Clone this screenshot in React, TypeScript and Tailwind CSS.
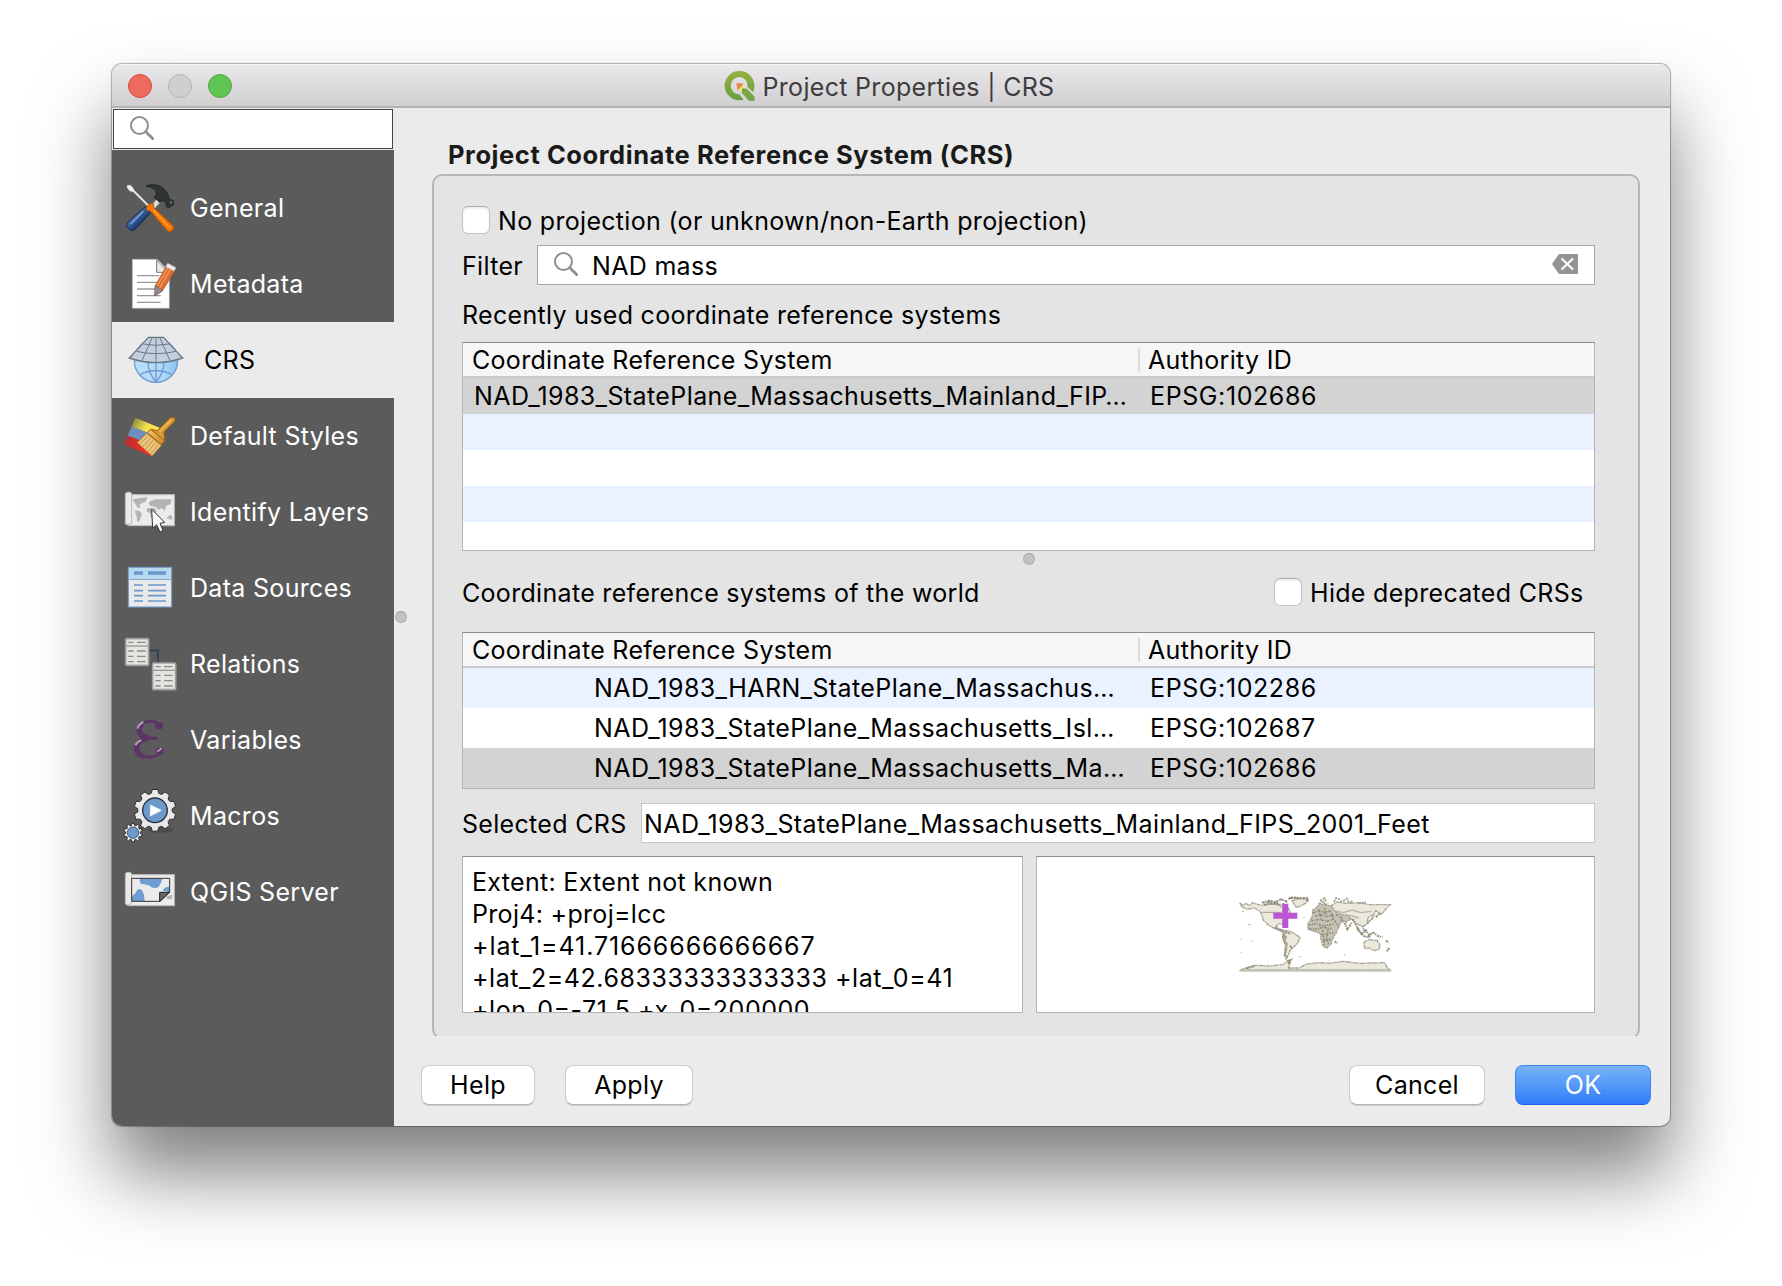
import type { ReactNode } from "react";

function Svg({ box, w = 56, h = 56, children }: { box: string; w?: number; h?: number; children: ReactNode }) {
  return (
    <svg viewBox={box} width={w} height={h} className="block shrink-0" fill="none">
      {children}
    </svg>
  );
}

const Tools = () => (
  <Svg box="66 390 168 168">
    <defs>
      <linearGradient id="blueGrip" x1="0" y1="0" x2="1" y2="1">
        <stop offset="0.2" stopColor="#5f8fce" />
        <stop offset="0.6" stopColor="#1f3f74" />
      </linearGradient>
    </defs>
    <path d="M152 470 L172 444 L184 454 L160 480 Z" fill="#d9dcd6" stroke="#8b8d88" strokeWidth="2" />
    <path d="M138 408 Q160 398 184 410 Q204 424 208 448 L220 452 Q224 464 214 468 L206 474 Q196 474 198 458 Q188 446 180 458 L162 442 Q172 434 168 424 Q158 410 138 408 Z" fill="#2e3436" stroke="#15191a" strokeWidth="2" />
    <circle cx="213" cy="457" r="4" fill="#626a6b" />
    <path d="M136 470 L154 486 L106 538 Q98 546 88 538 L82 532 Q76 524 84 516 Z" fill="url(#blueGrip)" stroke="#172c50" strokeWidth="3" />
    <path d="M130 484 L92 522" stroke="#85abe0" strokeWidth="4" />
    <path d="M98 420 L148 470" stroke="#e6e6e4" strokeWidth="6" />
    <path d="M82 406 L92 406 L102 418 L98 426 L88 422 L81 412 Z" fill="#f1f1ef" stroke="#cfcfcd" strokeWidth="1" />
    <path d="M152 460 L160 462 L162 474 L216 524 Q224 532 218 540 Q210 548 202 542 L152 484 L140 480 L140 470 Z" fill="#f57900" stroke="#c35400" strokeWidth="3" />
    <path d="M160 480 L208 532" stroke="#ffa640" strokeWidth="4" />
    <path d="M168 480 L212 526" stroke="#d86200" strokeWidth="2" />
  </Svg>
);

const Metadata = () => (
  <Svg box="66 618 168 168">
    <path d="M97 628 H172 L208 664 V775 H97 Z" fill="#fff" stroke="#a9a9a9" strokeWidth="2" />
    <path d="M170 630 V667 H206 Z" fill="#e8e8e8" stroke="#777" strokeWidth="3" />
    <path d="M111 677 H178 M111 697 H172 M111 717 H166 M111 737 H182 M111 757 H182" stroke="#999" strokeWidth="4" />
    <path d="M198 650 L224 662 L188 722 L164 738 L166 706 Z" fill="#dd6f32" stroke="#b5531c" strokeWidth="2" />
    <path d="M203 654 L170 710 M211 658 L178 716" stroke="#f2955c" strokeWidth="4" />
    <path d="M166 706 L188 722 L164 738 Z" fill="#8e8e8e" stroke="#636363" strokeWidth="2" />
    <path d="M203 640 L228 653 L222 663 L197 650 Z" fill="#ececec" stroke="#c7b3b3" strokeWidth="2" />
  </Svg>
);

const Globe = () => (
  <Svg box="84 66 168 168">
    <defs>
      <linearGradient id="sea" x1="0" y1="0" x2="1" y2="0">
        <stop offset="0" stopColor="#b9defa" />
        <stop offset="0.6" stopColor="#b3dbf8" />
        <stop offset="1" stopColor="#8cc4f2" />
      </linearGradient>
    </defs>
    <circle cx="168" cy="152" r="65" fill="url(#sea)" stroke="#6d9ad2" strokeWidth="4" />
    <path d="M168 87 V216 M143 150 Q145 194 168 215 Q191 194 193 150 M121 193 Q168 170 215 193" stroke="#6d9ad2" strokeWidth="4" />
    <path d="M145 82 H191 Q214 108 248 144 Q168 172 88 144 Q120 110 145 82 Z" fill="#c3cfde" stroke="#6a7885" strokeWidth="4" />
    <path d="M129 102 Q168 110 207 102 M110 124 Q168 138 228 124 M168 82 V157 M157 82 L126 152 M179 82 L210 152" stroke="#6a7885" strokeWidth="3" />
  </Svg>
);

const Styles = () => (
  <Svg box="66 294 168 168">
    <defs>
      <linearGradient id="yl" x1="0" y1="0" x2="1" y2="0.4">
        <stop offset="0" stopColor="#7d7a3c" />
        <stop offset="0.6" stopColor="#f6e34e" />
      </linearGradient>
      <linearGradient id="rd" x1="0" y1="0" x2="1" y2="0">
        <stop offset="0" stopColor="#b03030" />
        <stop offset="0.6" stopColor="#ee2a2a" />
      </linearGradient>
      <linearGradient id="brush" x1="0" y1="0" x2="1" y2="1">
        <stop offset="0" stopColor="#f0c877" />
        <stop offset="1" stopColor="#c9831d" />
      </linearGradient>
    </defs>
    <path d="M106 323 L186 356 L170 378 L95 350 Z" fill="url(#yl)" />
    <path d="M95 350 L160 374 L140 398 L83 377 Z" fill="#6f8fbd" />
    <path d="M83 377 L150 402 L158 440 L72 403 Z" fill="url(#rd)" />
    <path d="M216 322 Q228 322 224 334 L192 366 L194 392 L182 406 L140 372 L152 358 L172 362 L206 328 Q210 322 216 322 Z" fill="#d9982f" stroke="#9a6410" strokeWidth="3" />
    <path d="M140 370 L184 406 L156 438 L112 398 Z" fill="#ecc57c" stroke="#b98435" strokeWidth="3" />
    <path d="M144 378 L120 402 M152 384 L128 410 M160 390 L136 418 M168 396 L144 426 M176 402 L152 432" stroke="#a97a3a" strokeWidth="2" />
    <path d="M142 368 L152 358 L194 392 L184 404 Z" fill="url(#brush)" stroke="#9a6410" strokeWidth="3" />
    <path d="M214 330 L178 366" stroke="#f2c069" strokeWidth="4" />
  </Svg>
);

const Identify = () => (
  <Svg box="66 522 168 168">
    <rect x="84" y="554" width="139" height="93" fill="#ebebeb" stroke="#bdbdbd" strokeWidth="3" />
    <path d="M76 550 Q86 542 95 550 V640 Q84 648 76 642 Z" fill="#e9e9e9" stroke="#b9b9b9" strokeWidth="3" />
    <path d="M98 568 L120 564 L142 562 L138 574 L126 580 L118 584 L122 594 L112 592 L104 578 Z M104 602 L118 602 L126 612 L118 634 L112 636 L110 620 Z M150 574 L166 568 L214 568 L212 582 L198 588 L194 602 L184 594 L176 600 L166 590 L152 588 L146 580 Z M142 594 L164 594 L170 604 L162 628 L152 622 L150 610 L140 604 Z M200 624 L210 614 L216 618 L216 630 Z" fill="#b3b3b3" />
    <path d="M155 598 L158 654 L170 644 L180 666 L189 662 L180 640 L194 637 Z" fill="#fff" stroke="#333" strokeWidth="3" />
  </Svg>
);

const DataSources = () => (
  <Svg box="66 60 168 168">
    <rect x="85" y="82" width="130" height="119" fill="#e9e9ea" stroke="#6f9bce" strokeWidth="3" />
    <rect x="87" y="84" width="126" height="31" fill="#b7d9ee" />
    <path d="M86 118 H214" stroke="#7fa8d4" strokeWidth="4" />
    <path d="M102 99 H129 M144 99 H198" stroke="#6a98cd" strokeWidth="11" />
    <path d="M102 135 H129 M144 135 H198 M102 152 H129 M144 152 H198 M102 167 H129 M144 167 H198 M102 183 H129 M144 183 H198" stroke="#6a98cd" strokeWidth="5" />
  </Svg>
);

const MiniTable = ({ x, y }: { x: number; y: number }) => (
  <g transform={`translate(${x} ${y})`}>
    <rect x="2" y="2" width="69" height="80" rx="3" fill="#e4e4e2" stroke="#a0a09a" strokeWidth="5" />
    <path d="M3 24 H70" stroke="#9a9a94" strokeWidth="4" />
    <path d="M10 13 H26 M36 13 H62 M10 39 H26 M36 39 H62 M10 55 H26 M36 55 H62 M10 71 H26 M36 71 H62" stroke="#8b8b86" strokeWidth="4" />
  </g>
);

const Relations = () => (
  <Svg box="66 288 168 168">
    <path d="M146 331 H174 V368" stroke="#2c3e57" strokeWidth="5" />
    <MiniTable x={75} y={294} />
    <MiniTable x={156} y={367} />
  </Svg>
);

const Variables = () => (
  <Svg box="66 516 168 168">
    <path d="M182 556 Q170 543 150 544 Q120 547 120 568 Q122 591 148 595 L168 595 M148 595 Q114 599 112 624 Q114 650 150 651 Q182 648 186 630" stroke="#5c3566" strokeWidth="9" strokeLinecap="round" />
    <path d="M128 550 Q112 562 120 580 Q128 592 146 594 Q116 600 109 620 Q108 644 134 651" stroke="#5c3566" strokeWidth="16" />
    <ellipse cx="177" cy="557" rx="12" ry="11" fill="#5c3566" />
    <ellipse cx="180" cy="633" rx="12" ry="10" fill="#5c3566" />
    <path d="M112 566 Q116 552 130 546 M106 616 Q112 604 124 601 M172 634 Q182 630 184 624" stroke="#b49cba" strokeWidth="6" />
  </Svg>
);

function gear(cx: number, cy: number, r: number, depth: number, teeth: number) {
  const pts: string[] = [];
  for (let i = 0; i < teeth; i++) {
    const a = ((i + 0.5) / teeth) * Math.PI * 2;
    const s = Math.PI / teeth;
    [
      [-0.95, r - depth],
      [-0.55, r],
      [0.55, r],
      [0.95, r - depth],
    ].forEach(([k, d]) => {
      const t = a + k * s * 0.75;
      pts.push(`${(cx + Math.cos(t) * d).toFixed(1)},${(cy + Math.sin(t) * d).toFixed(1)}`);
    });
  }
  return pts.join(" ");
}

const Macros = () => (
  <Svg box="66 54 168 168">
    <ellipse cx="182" cy="180" rx="40" ry="8" fill="#4d4d4d" />
    <polygon points={gear(165, 121, 63, 11, 10)} fill="#e9e9e9" stroke="#2f2f2f" strokeWidth="3" strokeLinejoin="round" />
    <circle cx="165" cy="121" r="37" fill="#6c9acb" stroke="#26313d" strokeWidth="4" />
    <path d="M151 105 V138 L184 121 Z" fill="#fff" stroke="#fff" strokeWidth="2" strokeLinejoin="round" />
    <polygon points={gear(99, 188, 28, 6, 10)} fill="#eaeaea" stroke="#2f2f2f" strokeWidth="3" strokeLinejoin="round" />
    <circle cx="99" cy="188" r="17" fill="#6c9acb" stroke="#41576e" strokeWidth="3" />
  </Svg>
);

const Server = () => (
  <Svg box="66 282 168 168">
    <rect x="82" y="314" width="141" height="93" fill="#ebebeb" stroke="#bdbdbd" strokeWidth="3" />
    <path d="M76 310 Q86 303 95 310 V400 Q84 408 76 402 Z" fill="#e9e9e9" stroke="#b9b9b9" strokeWidth="3" />
    <path d="M198 380 L216 374 L216 386 L202 388 Z" fill="#b3b3b3" />
    <path d="M95 325 H209 V367 L180 394 H95 Z" fill="#ebebeb" />
    <path d="M119 327 H187 Q184 340 176 350 Q166 358 152 350 Q144 342 124 342 Q118 336 119 327 Z M96 378 Q106 374 110 362 Q118 352 127 362 Q134 374 134 393 H96 Z M188 362 Q192 350 208 350 V366 Z" fill="#6f9dd2" />
    <path d="M95 325 H209 V367 L180 394 H95 Z" stroke="#333" strokeWidth="3" />
    <path d="M209 367 H179 V394 Z" fill="#666" stroke="#222" strokeWidth="3" />
  </Svg>
);

const Logo = () => (
  <svg viewBox="0 0 30 30" width="31" height="30" className="block shrink-0" fill="none">
    <defs>
      <linearGradient id="qg" x1="0" y1="0" x2="0" y2="1">
        <stop offset="0" stopColor="#97b03c" />
        <stop offset="1" stopColor="#68a042" />
      </linearGradient>
    </defs>
    <path fillRule="evenodd" d="M15 0 A15 15 0 0 1 30 15 Q30 18 28.500 21 L23 16 Q23.500 7 15 6 A8.500 8.500 0 0 0 6.300 15 A8.500 8.500 0 0 0 15 23.500 L19 28.800 A15 15 0 0 1 0 15 A15 15 0 0 1 15 0 Z" fill="url(#qg)" />
    <path d="M12 12 L18.500 12.500 L17.500 16 L13 19.500 Z" fill="#e8854a" />
    <path d="M18 14.500 L20 17.500 L17.500 21 L14.500 17.500 Z" fill="#f4e552" />
    <path d="M17.500 17.500 H22 L30 25.500 V30 H24.500 L17.500 22 Z" fill="#77a647" />
  </svg>
);

const Search = () => (
  <svg viewBox="0 0 24 24" width="24" height="24" className="block shrink-0" fill="none" stroke="#909090">
    <circle cx="9.500" cy="9.500" r="8.500" strokeWidth="2" />
    <path d="M15.800 15.800 L22.800 22.800" strokeWidth="2.800" strokeLinecap="round" />
  </svg>
);

const Clear = () => (
  <svg viewBox="0 0 26 20" width="26" height="20" className="block shrink-0" fill="none">
    <path d="M0 10 L7 0 H26 V20 H7 Z" fill="#959595" />
    <path d="M9.500 4.500 L21 15.500 M21 4.500 L9.500 15.500" stroke="#fff" strokeWidth="2" />
  </svg>
);

const WorldMap = () => (
  <svg viewBox="56 48 466 240" width="155.300" height="80" className="block shrink-0" fill="none">
    <g fill="#ebe8dc" stroke="#a5a293" strokeWidth="4" strokeLinejoin="round" strokeDasharray="11 2 5 2">
      <path d="M62 70 L72 76 L78 70 L92 76 L100 68 L124 76 L150 72 L176 74 L190 84 L204 80 L214 96 L206 106 L196 116 L194 134 L182 130 L172 136 L176 146 L190 150 L200 160 L186 154 L166 146 L148 136 L132 120 L124 96 L106 84 L84 88 L66 80 Z" />
      <path d="M218 62 L240 56 L266 60 L258 70 L240 80 L230 82 L224 72 Z" />
      <path d="M194 152 L208 152 L224 160 L242 172 L236 188 L224 200 L212 212 L206 228 L200 238 L196 224 L198 196 L190 174 Z" />
      <path d="M64 270 L84 262 L110 256 L150 258 L190 254 L208 240 L214 246 L206 264 L240 264 L262 252 L300 248 L330 250 L372 244 L420 250 L496 248 L504 264 L514 270 Z" />
      <path d="M334 78 L352 66 L384 70 L420 68 L452 74 L514 74 L500 86 L492 98 L482 104 L470 92 L462 104 L446 112 L444 130 L432 140 L410 130 L394 116 L372 112 L350 102 L336 96 Z" />
      <path d="M434 186 L452 178 L464 182 L472 180 L482 194 L480 208 L464 212 L450 204 L436 206 Z" />
    </g>
    <path d="M280 90 L290 84 L302 70 L312 74 L336 78 L348 94 L366 104 L388 106 L394 118 L380 126 L368 122 L362 134 L356 146 L350 160 L342 172 L336 190 L324 204 L312 200 L306 182 L302 160 L284 154 L266 148 L266 130 L274 118 L280 106 Z" fill="#c6c3b4" stroke="#a09d8c" strokeWidth="4" strokeDasharray="5 3 8 2" />
    <path d="M128 68 L150 62 L168 66 L186 58 L206 66 M134 74 L160 70 L184 74 L204 76 M144 66 L176 68 M190 70 L206 88 M208 58 L214 52 L238 54 M214 54 L266 54 L264 66" stroke="#8f8c7b" strokeWidth="6" strokeDasharray="8 2 5 3" />
    <path d="M282 98 L300 92 L318 98 L330 92 M288 108 L304 104 L324 110 L340 104 M276 122 L300 118 L322 124 L346 116 M268 136 L290 130 L310 138 L342 132 M270 146 L292 148 L308 142 L336 146 M298 88 L306 116 M316 84 L320 104 M332 92 L344 116 M310 150 L316 194 M326 148 L322 176 L328 192 M306 164 L342 158 M312 180 L336 178 M346 122 L356 138 M350 104 L372 116" stroke="#858271" strokeWidth="4.500" strokeDasharray="6 4 3 3" />
    <path d="M302 62 L316 54 L320 64 M298 72 L312 64 L318 76 L326 68 M344 66 L350 54 L362 58 M362 66 L376 60 L384 56 L388 66 L402 64 M418 70 L440 66" stroke="#a09d8c" strokeWidth="5" strokeDasharray="7 3" />
    <path d="M346 92 L372 98 L398 90 L424 98 L456 94 M378 106 L400 108 L418 114" stroke="#b8b5a6" strokeWidth="4" />
    <path d="M364 118 L376 128 L384 148 L390 140 L398 126 M400 116 L410 134 L416 150 L426 162 L436 156 L430 138 M414 142 L432 168 L448 172 L458 158 M438 148 L448 164 L462 158 L476 168 L490 172 M444 130 L458 116 L466 104 M470 112 L482 98 M500 182 L508 188 M510 204 L500 216 M346 184 L354 190" stroke="#96937f" strokeWidth="6" strokeDasharray="7 2 4 3" />
    <path d="M166 142 L180 148 L194 156 L206 158 L214 162 M192 160 L200 172 L194 180 L202 192 L200 210 L196 226 L206 232 M212 198 L220 206 M190 166 L198 186 M204 244 L214 240 L206 254 M80 266 L104 258" stroke="#96937f" strokeWidth="6" strokeDasharray="8 2 5 2" />
    <path d="M86 134 H94 M68 94 H74 M240 230 H246 M374 224 H378 M64 178 H68 M96 184 H100 M252 112 H256 M64 218 H67" stroke="#c4c2b8" strokeWidth="4" />
    <path d="M60 272 H516" stroke="#c6c4b9" strokeWidth="6" />
    <path d="M126 97 H186" stroke="#a5a293" strokeWidth="3" />
    <path d="M162 107 H234 M198 71 V144" stroke="#ba55d3" strokeWidth="18" />
  </svg>
);

const items: [string, ReactNode][] = [
  ["General", <Tools />],
  ["Metadata", <Metadata />],
  ["CRS", <Globe />],
  ["Default Styles", <Styles />],
  ["Identify Layers", <Identify />],
  ["Data Sources", <DataSources />],
  ["Relations", <Relations />],
  ["Variables", <Variables />],
  ["Macros", <Macros />],
  ["QGIS Server", <Server />],
];

const Check = () => (
  <span className="h-[28px] w-[28px] shrink-0 rounded-[6px] border border-[#c3c3c3] border-t-[#a9a9a9] bg-white shadow-[inset_0_2px_2px_rgba(0,0,0,0.07)]" />
);

const Grip = () => (
  <span className="block h-[12px] w-[12px] rounded-full border border-[#b0b0b0] border-t-[#989898] bg-[#c2c2c2]" />
);

const HeaderRow = () => (
  <div className="flex h-[35px] shrink-0 items-center border-b-2 border-[#cacaca] bg-[#f6f6f6]">
    <span className="w-[675px] pl-[9px] pt-px">Coordinate Reference System</span>
    <span className="h-[24px] w-[2px] bg-[#dcdcdc]" />
    <span className="pl-[8px] pt-px">Authority ID</span>
  </div>
);

const frame = "border border-[#b4b4b4] border-t-[#8c8c8c]";

const worldRows: [string, string, string][] = [
  ["NAD_1983_HARN_StatePlane_Massachus…", "EPSG:102286", "bg-[#ebf2ff]"],
  ["NAD_1983_StatePlane_Massachusetts_Isl…", "EPSG:102687", "bg-white"],
  ["NAD_1983_StatePlane_Massachusetts_Ma…", "EPSG:102686", "bg-[#d3d3d3]"],
];

const btn =
  "flex h-[40px] items-center justify-center rounded-[8px] border border-[#cdcdcd] border-b-[#b0b0b0] bg-white shadow-[0_1px_1px_rgba(0,0,0,0.12)]";

export default function App() {
  return (
    <div className="h-[1286px] w-[1782px] overflow-hidden bg-white pl-[112px] pt-[64px] font-['Inter',sans-serif] text-[25px] leading-[30px] tracking-[0.31px] text-black">
      <div className="flex h-[1062px] w-[1558px] flex-col overflow-hidden rounded-[10px] bg-[#ebebeb] shadow-[0_0_1px_1px_rgba(0,0,0,0.3),0_48px_76px_rgba(0,0,0,0.5)]">
        <header className="relative flex h-[44px] shrink-0 items-center justify-center border-b-2 border-[#b3b0b3] bg-linear-to-b from-[#eae8ea] to-[#d1cfd1] pr-[4px] shadow-[inset_0_1px_0_#f6f5f6]">
          <div className="absolute left-[16px] top-[10px] flex gap-[16px]">
            <span className="h-[24px] w-[24px] rounded-full border border-[#d8493f] bg-[#ed6a5e]" />
            <span className="h-[24px] w-[24px] rounded-full border border-[#b4b2b4] bg-[#d0cfd0]" />
            <span className="h-[24px] w-[24px] rounded-full border border-[#4fa83d] bg-[#61c554]" />
          </div>
          <div className="pt-[2px]">
            <Logo />
          </div>
          <h1 className="whitespace-nowrap pl-[8px] pt-[4px] text-[#3e3c3e]">Project Properties | CRS</h1>
        </header>

        <div className="flex min-h-0 flex-1">
          <aside className="flex w-[282px] shrink-0 flex-col">
            <div className="mx-px mt-px flex h-[40px] shrink-0 items-center border border-[#444] bg-white pb-[3px] pl-[16px]">
              <Search />
            </div>
            <nav className="mt-px flex-1 bg-[#5b5b5b] pt-[20px]">
              {items.map(([label, icon]) => (
                <div
                  key={label}
                  className={
                    label === "CRS"
                      ? "flex h-[76px] items-center gap-[20px] bg-[#ebebeb] pl-[16px]"
                      : "flex h-[76px] items-center gap-[12px] pl-[10px] text-white"
                  }
                >
                  {icon}
                  <span className="whitespace-nowrap">{label}</span>
                </div>
              ))}
            </nav>
          </aside>

          <div className="flex w-[14px] shrink-0 items-center justify-center">
            <Grip />
          </div>

          <main className="flex flex-1 flex-col pt-[32px]">
            <h2 className="h-[30px] whitespace-nowrap pl-[40px] text-[25.500px] font-bold tracking-[0.560px] text-[#1a1a1a]">
              Project Coordinate Reference System (CRS)
            </h2>
            <div className="ml-[24px] mt-[4px] h-[862px] w-[1208px] shrink-0 overflow-hidden">
              <section className="flex h-[865px] flex-col rounded-[10px] border-2 border-[#b7b7b7] bg-[#e4e4e4] pl-[28px] pr-[43px]">
                <label className="mt-[30px] flex h-[28px] items-center">
                  <Check />
                  <span className="pl-[8px] pt-[2px]">No projection (or unknown/non-Earth projection)</span>
                </label>
                <div className="mt-[11px] flex h-[40px] items-center">
                  <span className="w-[75px] pt-[2px]">Filter</span>
                  <div className="flex h-[40px] flex-1 items-center border border-[#a6a6a6] bg-white pl-[16px] pr-[16px]">
                    <div className="pb-[2px]">
                      <Search />
                    </div>
                    <span className="flex-1 pl-[14px] pt-[2px]">NAD mass</span>
                    <div className="pb-[2px]">
                      <Clear />
                    </div>
                  </div>
                </div>
                <p className="mt-[15px] h-[30px]">Recently used coordinate reference systems</p>

                <div className={`mt-[12px] flex h-[209px] shrink-0 flex-col overflow-hidden bg-white ${frame}`}>
                  <HeaderRow />
                  <div className="flex h-[36px] shrink-0 items-center bg-[#d3d3d3]">
                    <span className="w-[687px] whitespace-nowrap pl-[11px] tracking-[0.400px]">
                      NAD_1983_StatePlane_Massachusetts_Mainland_FIP…
                    </span>
                    <span className="tracking-[0.600px]">EPSG:102686</span>
                  </div>
                  <div className="h-[36px] shrink-0 bg-[#ebf2ff]" />
                  <div className="h-[36px] shrink-0 bg-white" />
                  <div className="h-[36px] shrink-0 bg-[#ebf2ff]" />
                </div>

                <div className="mt-[2px] flex h-[12px] justify-center">
                  <Grip />
                </div>

                <div className="mt-[13px] flex h-[28px] items-center">
                  <span className="w-[812px] pt-[2px]">Coordinate reference systems of the world</span>
                  <Check />
                  <span className="whitespace-nowrap pl-[8px] pt-[2px]">Hide deprecated CRSs</span>
                </div>

                <div className={`mt-[26px] flex h-[157px] shrink-0 flex-col overflow-hidden bg-white ${frame}`}>
                  <HeaderRow />
                  {worldRows.map(([name, id, bg]) => (
                    <div key={name} className={`flex h-[40px] shrink-0 items-center ${bg}`}>
                      <span className="w-[687px] whitespace-nowrap pl-[131px] tracking-[0.400px]">{name}</span>
                      <span className="tracking-[0.600px]">{id}</span>
                    </div>
                  ))}
                </div>

                <div className="mt-[14px] flex h-[40px] items-center">
                  <span className="w-[179px] whitespace-nowrap pt-[2px]">Selected CRS</span>
                  <div className="flex h-[40px] flex-1 items-center border border-[#c6c6c6] bg-white pl-[2px] pt-[2px] tracking-[0.400px]">
                    NAD_1983_StatePlane_Massachusetts_Mainland_FIPS_2001_Feet
                  </div>
                </div>

                <div className="mt-[13px] flex h-[157px] shrink-0 gap-[13px]">
                  <div className={`w-[561px] overflow-hidden whitespace-nowrap bg-white pl-[9px] pt-[9px] leading-[32px] ${frame}`}>
                    <p>Extent: Extent not known</p>
                    <p>Proj4: +proj=lcc</p>
                    <p className="tracking-[0.900px]">+lat_1=41.71666666666667</p>
                    <p className="tracking-[0.550px]">+lat_2=42.68333333333333 +lat_0=41</p>
                    <p className="tracking-[0.520px]">+lon_0=-71.5 +x_0=200000</p>
                  </div>
                  <div className={`flex flex-1 items-center justify-center bg-white pt-[2px] ${frame}`}>
                    <WorldMap />
                  </div>
                </div>
              </section>
            </div>

            <footer className="mt-[29px] flex h-[40px] pl-[13px] pr-[19px]">
              <button className={`w-[114px] ${btn}`}>Help</button>
              <button className={`ml-[30px] w-[128px] ${btn}`}>Apply</button>
              <span className="flex-1" />
              <button className={`w-[136px] ${btn}`}>Cancel</button>
              <button className="ml-[30px] flex h-[40px] w-[136px] items-center justify-center rounded-[8px] border border-[#3f86ec] border-b-[#1f62e8] bg-linear-to-b from-[#77b3f6] to-[#2f7cf8] text-white">
                OK
              </button>
            </footer>
          </main>
        </div>
      </div>
    </div>
  );
}
